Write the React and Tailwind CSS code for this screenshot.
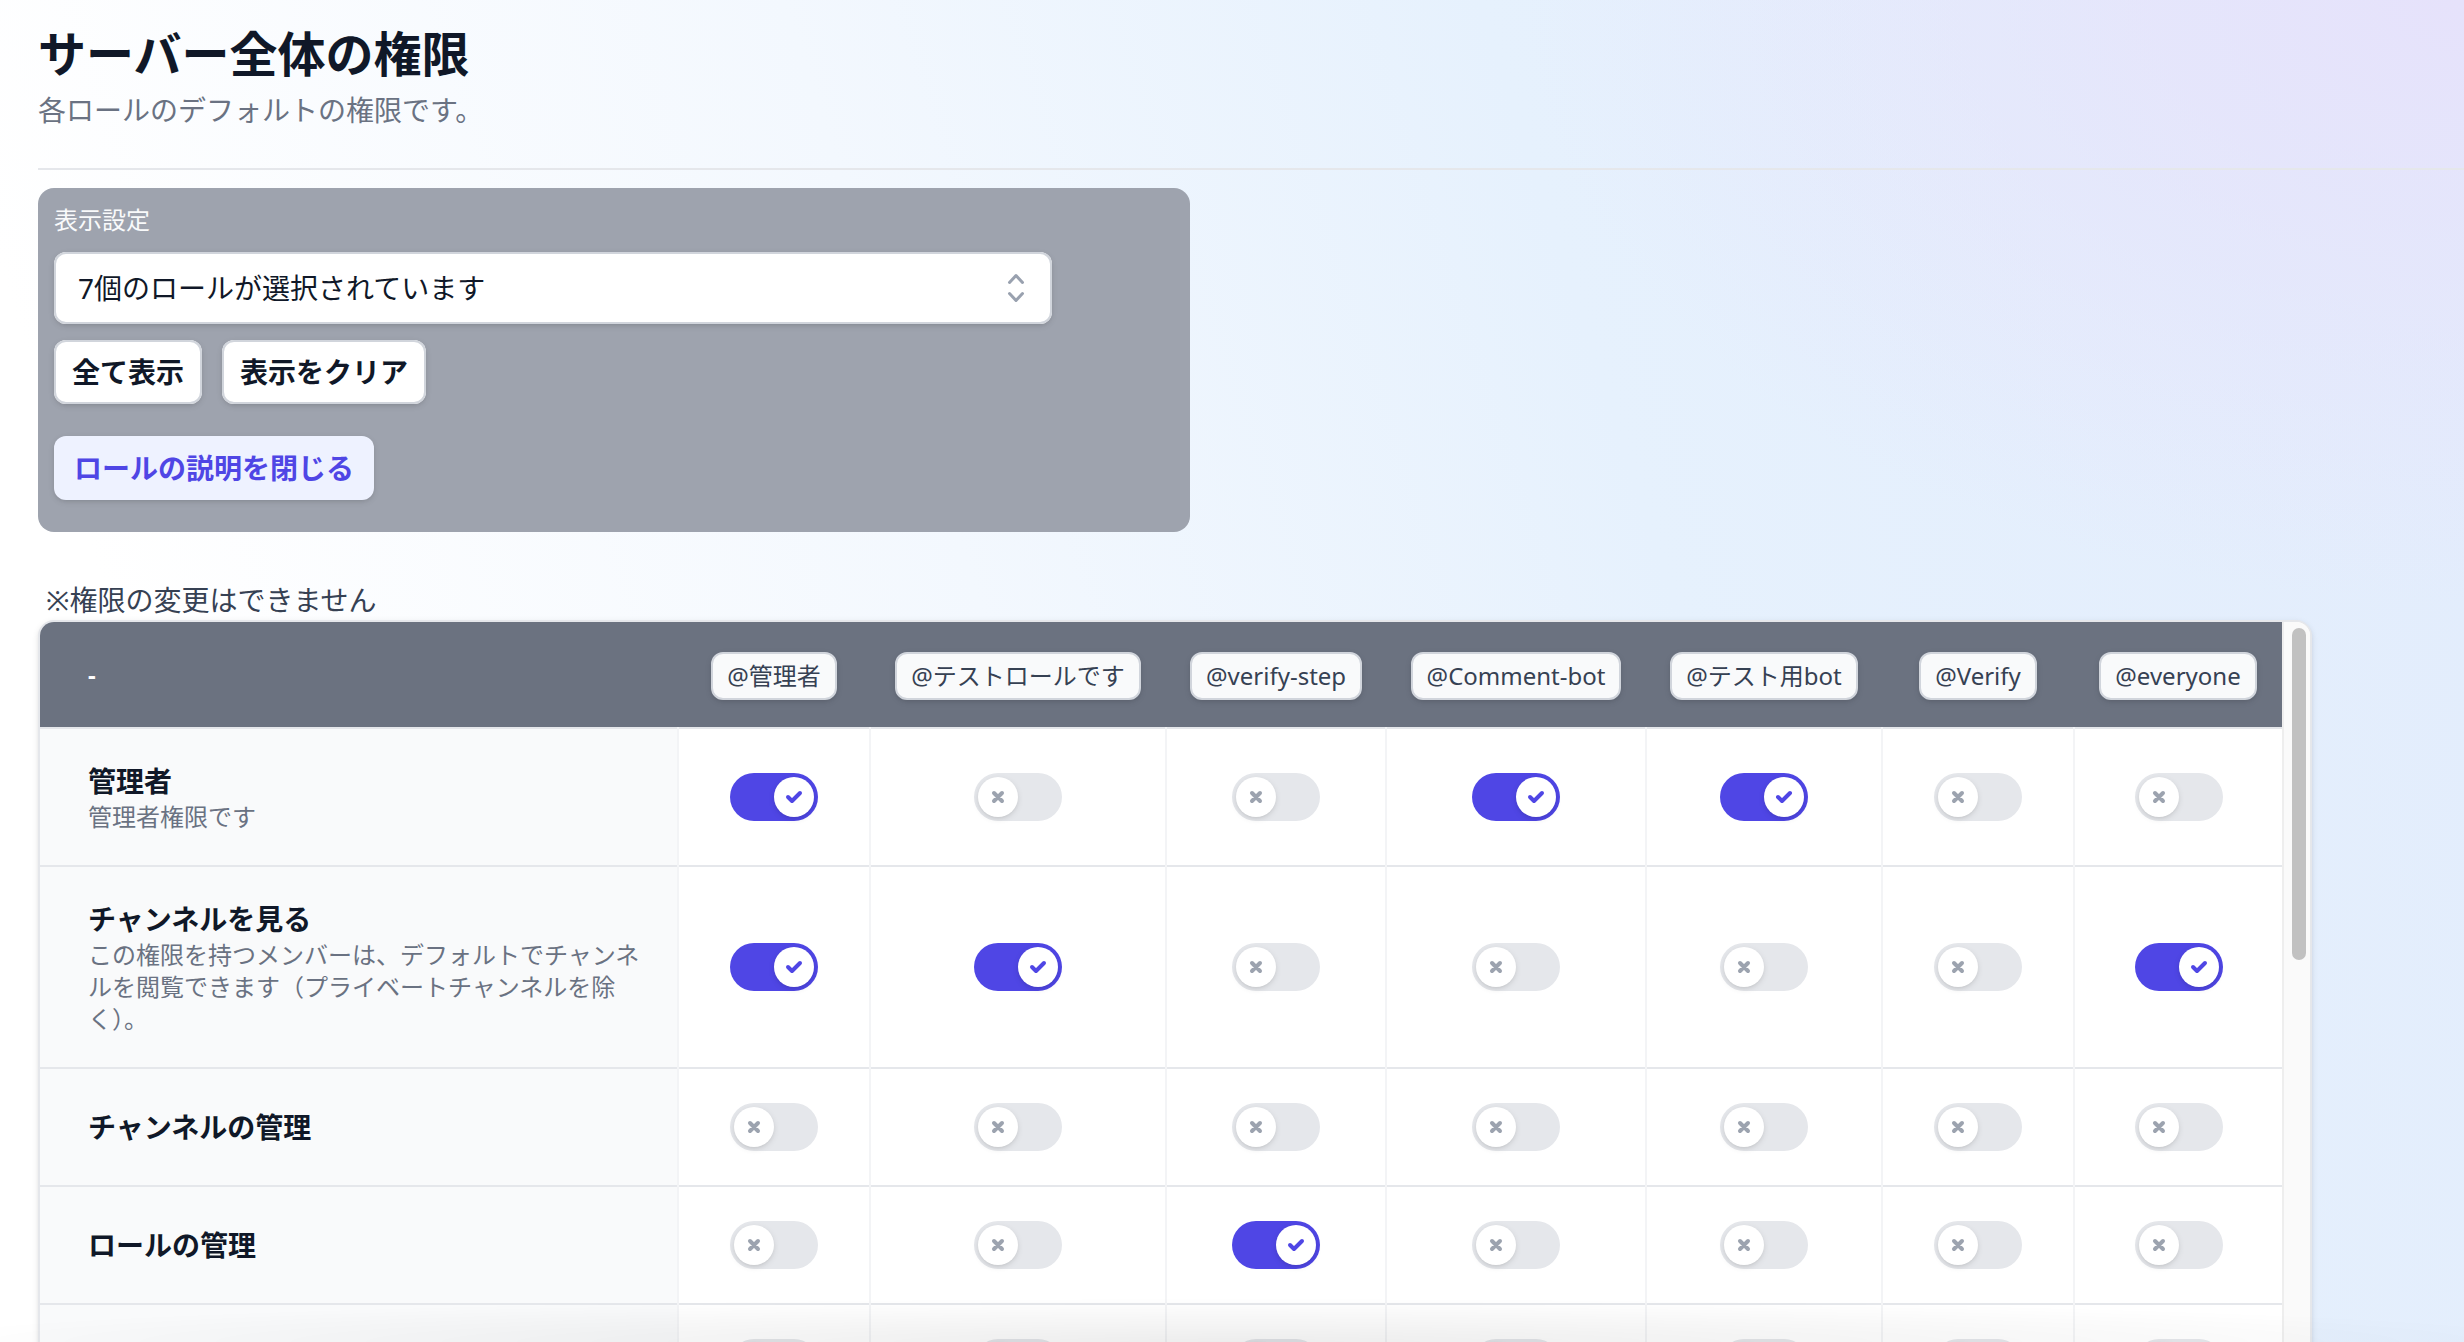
import React from 'react';

const roles = [
  { name: '@管理者', w: 'w-[96px]' },
  { name: '@テストロールです', w: 'w-[148px]' },
  { name: '@verify-step', w: 'w-[110px]' },
  { name: '@Comment-bot', w: 'w-[130px]' },
  { name: '@テスト用bot', w: 'w-[118px]' },
  { name: '@Verify', w: 'w-[96px]' },
  { name: '@everyone', w: 'w-[104px]' },
];

const off7 = [0, 0, 0, 0, 0, 0, 0];

const permissions = [
  { name: '管理者', desc: '管理者権限です', values: [1, 0, 0, 1, 1, 0, 0] },
  {
    name: 'チャンネルを見る',
    desc: 'この権限を持つメンバーは、デフォルトでチャンネルを閲覧できます（プライベートチャンネルを除く）。',
    values: [1, 1, 0, 0, 0, 0, 1],
  },
  { name: 'チャンネルの管理', values: off7 },
  { name: 'ロールの管理', values: [0, 0, 1, 0, 0, 0, 0] },
  { name: '絵文字の管理', values: off7 },
  { name: '監査ログを表示', values: off7 },
  { name: 'ウェブフックの管理', values: off7 },
  { name: 'サーバー管理', values: off7 },
  { name: '招待を作成', values: [0, 0, 0, 0, 0, 0, 1] },
  { name: 'ニックネームの変更', values: [0, 0, 0, 0, 0, 0, 1] },
  { name: 'ニックネームの管理', values: off7 },
  { name: 'メンバーをキック', values: off7 },
  { name: 'メンバーをBAN', values: off7 },
  { name: 'メッセージを送信', values: [0, 0, 0, 0, 0, 0, 1] },
  { name: 'スレッドでメッセージを送信', values: [0, 0, 0, 0, 0, 0, 1] },
  { name: '公開スレッドの作成', values: off7 },
  { name: 'プライベートスレッドの作成', values: off7 },
  { name: '埋め込みリンク', values: [0, 0, 0, 0, 0, 0, 1] },
  { name: 'ファイルを添付', values: [0, 0, 0, 0, 0, 0, 1] },
  { name: 'リアクションの追加', values: [0, 0, 0, 0, 0, 0, 1] },
  { name: '外部の絵文字を使用する', values: off7 },
  { name: '外部のスタンプを使用する', values: off7 },
  { name: '@everyone、@here、全てのロールにメンション', values: off7 },
  { name: 'メッセージの管理', values: off7 },
  { name: 'スレッドの管理', values: off7 },
  { name: 'メッセージ履歴を読む', values: [0, 0, 0, 0, 0, 0, 1] },
  { name: 'テキスト読み上げメッセージを送信する', values: off7 },
  { name: 'アプリコマンドを使う', values: [0, 0, 0, 0, 0, 0, 1] },
  { name: '接続', values: [0, 0, 0, 0, 0, 0, 1] },
  { name: '発言', values: [0, 0, 0, 0, 0, 0, 1] },
  { name: 'WEB カメラ', values: off7 },
  { name: '音声検出を使用', values: off7 },
  { name: '優先スピーカー', values: off7 },
  { name: 'メンバーをミュート', values: off7 },
  { name: 'メンバーのスピーカーをミュート', values: off7 },
  { name: 'メンバーを移動', values: off7 },
  { name: 'イベントの管理', values: off7 },
];

function Toggle({ on }) {
  return (
    <span
      className={`relative inline-flex h-6 w-11 shrink-0 rounded-full border-2 border-transparent ${
        on ? 'bg-[#4f46e5]' : 'bg-[#e5e7eb]'
      }`}
    >
      <span
        className={`relative inline-block size-5 rounded-full bg-white shadow ${
          on ? 'translate-x-5' : 'translate-x-0'
        }`}
      >
        <span className="absolute inset-0 flex items-center justify-center">
          {on ? (
            <svg viewBox="0 0 12 12" fill="currentColor" className="size-3 text-[#4f46e5]">
              <path d="M3.707 5.293a1 1 0 00-1.414 1.414l1.414-1.414zM5 8l-.707.707a1 1 0 001.414 0L5 8zm4.707-3.293a1 1 0 00-1.414-1.414l1.414 1.414zm-7.414 2l2 2 1.414-1.414-2-2-1.414 1.414zm3.414 2l4-4-1.414-1.414-4 4 1.414 1.414z" />
            </svg>
          ) : (
            <svg viewBox="0 0 12 12" fill="none" className="size-3 text-[#9ca3af]">
              <path
                d="M4 8l2-2m0 0l2-2M6 6L4 4m2 2l2 2"
                stroke="currentColor"
                strokeWidth={2}
                strokeLinecap="round"
                strokeLinejoin="round"
              />
            </svg>
          )}
        </span>
      </span>
    </span>
  );
}

export default function App() {
  return (
    <div className="min-h-screen bg-fixed bg-[radial-gradient(ellipse_38%_45%_at_100%_0%,#e6e2fb_0%,rgba(230,226,251,0)_100%),linear-gradient(72deg,#ffffff_12%,#f3f8fe_42%,#e6f1fd_66%,#e2ecfc_100%)] [font-family:'Noto_Sans','Noto_Sans_CJK_JP',sans-serif]">
      <div className="[zoom:2]">
        <div className="pl-[19px] pt-[11px] pb-10">
          {/* Heading */}
          <h1 className="text-2xl font-bold text-gray-900">サーバー全体の権限</h1>
          <p className="mt-0.5 text-sm text-gray-500">各ロールのデフォルトの権限です。</p>
          <hr className="mt-[19px] mb-[9px] border-gray-200" />

          {/* Display settings */}
          <div className="max-w-xl rounded-lg bg-[#9ea3ae] px-2 pt-2 pb-4">
            <label className="block text-xs text-gray-50">表示設定</label>
            <button className="relative mt-2 flex w-[499px] items-center rounded-md bg-white py-2 pl-3 pr-10 text-left text-sm text-gray-900 shadow-sm ring-1 ring-inset ring-gray-300">
              <span>7個のロールが選択されています</span>
              <span className="absolute inset-y-0 right-0 flex items-center pr-2">
                <svg viewBox="0 0 20 20" fill="currentColor" className="size-5 text-gray-400">
                  <path
                    fillRule="evenodd"
                    d="M10 3a.75.75 0 01.55.24l3.25 3.5a.75.75 0 11-1.1 1.02L10 4.852 7.3 7.76a.75.75 0 01-1.1-1.02l3.25-3.5A.75.75 0 0110 3zm-3.76 9.2a.75.75 0 011.06.04l2.7 2.908 2.7-2.908a.75.75 0 111.1 1.02l-3.25 3.5a.75.75 0 01-1.1 0l-3.25-3.5a.75.75 0 01.04-1.06z"
                    clipRule="evenodd"
                  />
                </svg>
              </span>
            </button>
            <div className="mt-2 flex gap-2.5">
              <button className="rounded-md bg-white px-[9px] py-1.5 text-sm font-bold text-gray-900 shadow-sm ring-1 ring-inset ring-gray-300">
                全て表示
              </button>
              <button className="rounded-md bg-white px-[9px] py-1.5 text-sm font-bold text-gray-900 shadow-sm ring-1 ring-inset ring-gray-300">
                表示をクリア
              </button>
            </div>
            <button className="mt-4 rounded-md bg-[#eef2ff] px-2.5 py-1.5 text-sm font-bold text-[#4f46e5] shadow-sm">
              ロールの説明を閉じる
            </button>
          </div>

          <p className="mt-6 pl-1 text-sm text-gray-700">※権限の変更はできません</p>

          {/* Permission table with its scroll rail */}
          <div className="flex max-h-[616px] w-[1137px] overflow-hidden rounded-lg border border-gray-200 bg-white shadow-sm">
            <div className="overflow-y-auto [scrollbar-width:none]">
              <table className="w-[1121px] table-fixed">
                <thead>
                  <tr className="border-b border-gray-200">
                    <th className="h-[53px] w-[319px] bg-[#6b7280] pl-6 text-left text-xs font-bold text-white">-</th>
                    {roles.map(role => (
                      <th key={role.name} className={`h-[53px] ${role.w} bg-[#6b7280] px-3 text-center font-normal`}>
                        <span className="inline-block whitespace-nowrap rounded-md border border-gray-300 bg-gray-50 px-[7px] py-[3px] text-xs text-gray-700 shadow-sm">
                          {role.name}
                        </span>
                      </th>
                    ))}
                  </tr>
                </thead>
                <tbody>
                  {permissions.map(perm => (
                    <tr key={perm.name} className="border-b border-gray-200">
                      <td className="bg-[#f9fafb] py-4 pl-6 pr-4 align-middle">
                        <div className="text-sm font-bold text-gray-900">{perm.name}</div>
                        {perm.desc && <div className="text-xs text-gray-500">{perm.desc}</div>}
                      </td>
                      {perm.values.map((v, i) => (
                        <td key={i} className="border-l border-gray-100 px-3 py-[17px] align-middle">
                          <div className="flex justify-center">
                            <Toggle on={v === 1} />
                          </div>
                        </td>
                      ))}
                    </tr>
                  ))}
                </tbody>
              </table>
            </div>
            <div className="w-[14px] shrink-0 border-l border-[#eeeeee] bg-[#fafafa]">
              <div className="mt-[3px] ml-[4px] h-[166px] w-[7px] rounded-full bg-[#c1c1c1]" />
            </div>
          </div>
        </div>
      </div>

      <div className="pointer-events-none fixed inset-x-0 bottom-0 h-[44px] bg-[radial-gradient(55%_100%_at_50%_100%,rgba(0,0,0,0.07),transparent)]" />
    </div>
  );
}
